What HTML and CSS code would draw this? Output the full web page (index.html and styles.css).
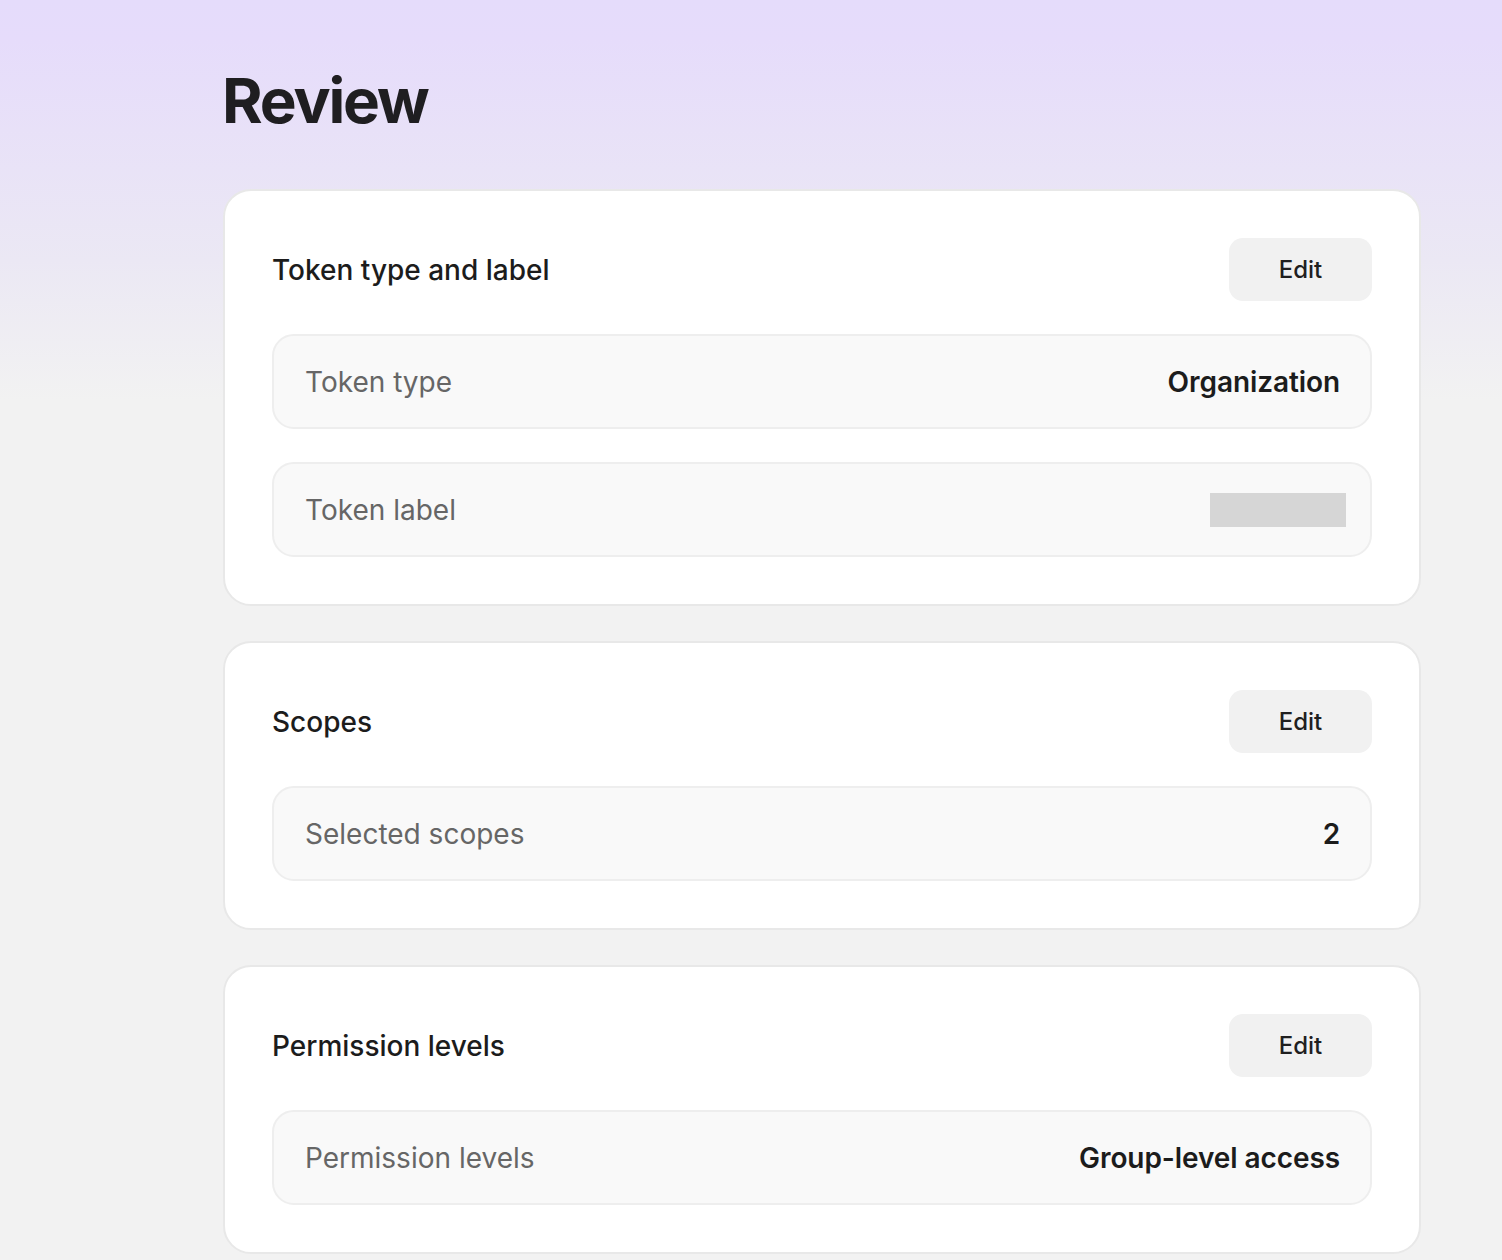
FILE: index.html
```html
<!DOCTYPE html>
<html lang="en">
<head>
<meta charset="utf-8">
<title>Review</title>
<link rel="stylesheet" href="styles.css">
</head>
<body>
<main class="page">
  <h1 class="title">Review</h1>
  <section class="card">
    <div class="card-head">
      <h2 class="card-title">Token type and label</h2>
      <button class="edit">Edit</button>
    </div>
    <div class="row">
      <span class="label">Token type</span>
      <span class="value">Organization</span>
    </div>
    <div class="row">
      <span class="label">Token label</span>
      <span class="placeholder"></span>
    </div>
  </section>
  <section class="card">
    <div class="card-head">
      <h2 class="card-title">Scopes</h2>
      <button class="edit">Edit</button>
    </div>
    <div class="row">
      <span class="label">Selected scopes</span>
      <span class="value">2</span>
    </div>
  </section>
  <section class="card">
    <div class="card-head">
      <h2 class="card-title">Permission levels</h2>
      <button class="edit">Edit</button>
    </div>
    <div class="row">
      <span class="label">Permission levels</span>
      <span class="value">Group-level access</span>
    </div>
  </section>
</main>
</body>
</html>
```
FILE: styles.css
```css
* { box-sizing: border-box; }
html, body {
  margin: 0;
  min-height: 100%;
}
body {
  font-family: Inter, "Noto Sans", sans-serif;
  color: #1f1f1f;
  background: #f2f2f2 linear-gradient(180deg, #e5dcfb 0px, #e6dcfb 40px, #ebe8f4 260px, #f2f2f2 400px) no-repeat;
  min-height: 1260px;
}
.page {
  margin-left: 223px;
  width: 1198px;
  padding-top: 64px;
  display: flex;
  flex-direction: column;
  gap: 35px;
}
.title {
  margin: 0 0 16px -1px;
  font-size: 62px;
  line-height: 74px;
  font-weight: 700;
  letter-spacing: -0.035em;
  color: #1f1e21;
}
.card {
  background: #fff;
  border: 2px solid #e8e8e8;
  border-radius: 28px;
  padding: 47px 47px 47px;
  display: flex;
  flex-direction: column;
  gap: 33px;
}
.card-head {
  display: flex;
  align-items: center;
  justify-content: space-between;
  height: 63px;
}
.card-title {
  margin: 0;
  font-size: 28px;
  font-weight: 500;
  color: #1c1c1c;
}
.edit {
  width: 143px;
  height: 63px;
  border: 0;
  border-radius: 14px;
  background: #f1f1f1;
  font-family: inherit;
  font-size: 24px;
  font-weight: 500;
  color: #1f1f1f;
}
.row {
  height: 95px;
  border: 2px solid #eeeeee;
  border-radius: 22px;
  background: #f9f9f9;
  display: flex;
  align-items: center;
  justify-content: space-between;
  padding: 0 30px 0 31px;
}
.label {
  font-size: 28px;
  color: #666666;
}
.value {
  font-size: 28px;
  font-weight: 600;
  color: #1c1c1c;
  letter-spacing: -0.003em;
}
.placeholder {
  width: 136px;
  height: 34px;
  background: #d6d6d6;
  margin-right: -6px;
}
```
